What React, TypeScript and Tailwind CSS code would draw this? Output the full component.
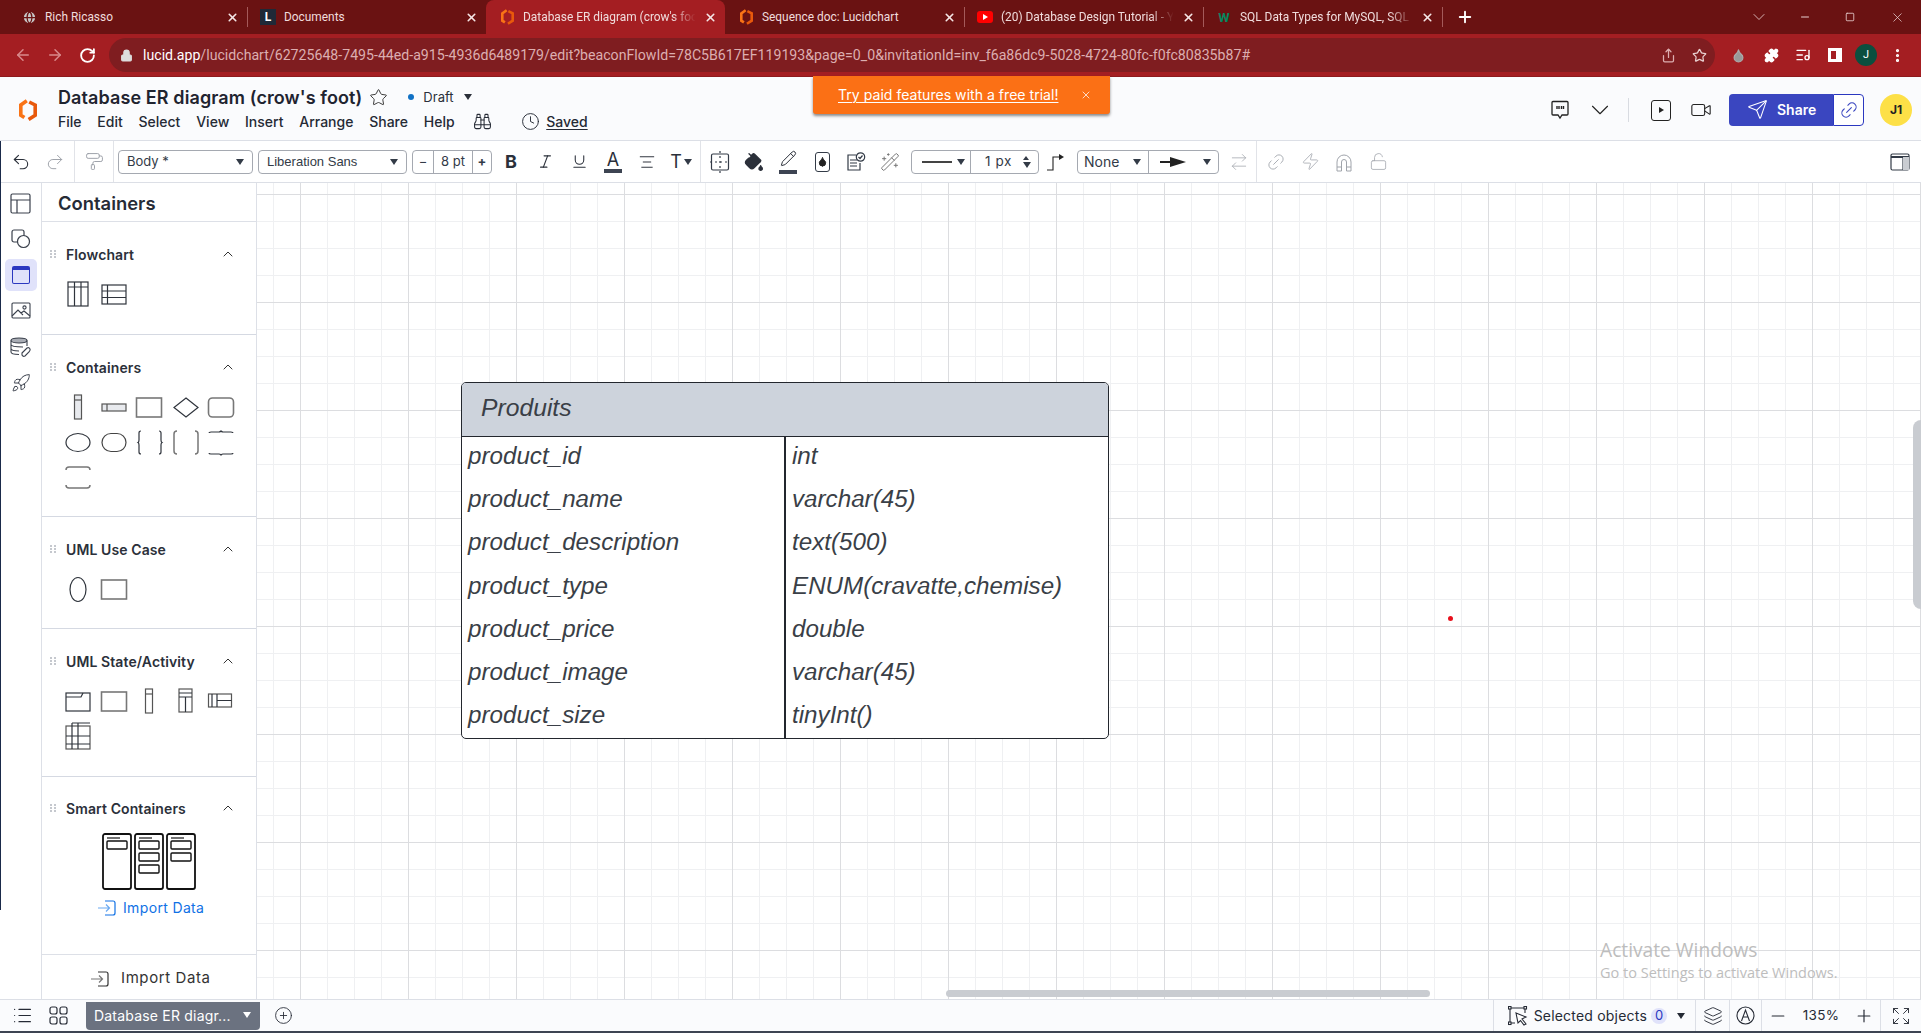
import React from "react";
import {
  ArrowLeft, ArrowRight, RotateCw, Lock, Star, ChevronUp, ChevronDown, X, Plus, Minus, Video, Send, Link2, Zap,
  LockOpen, Layers, Expand, List, CirclePlus, PaintRoller, Italic, Underline, Rocket, Binoculars, Clock,
  PaintBucket, Pencil, WandSparkles, ArrowRightLeft, Puzzle, Share, EllipsisVertical, Globe, Undo2, Redo2,
  AlignCenter, Square, ListMusic, Droplet,
} from "lucide-react";

const Logo = ({ size = 16 }: { size?: number }) => (
  <svg width={size} height={size * 1.2} viewBox="0 0 15 18" fill="none" strokeWidth="3" strokeLinejoin="miter">
    <path d="M6.500 1.500 L1.500 5 V13.500 L4.500 15.500" stroke="#f97316" />
    <path d="M8.500 2.500 L13.500 5 V13.500 L8 17" stroke="#e8590c" />
  </svg>
);

const Tri = ({ className = "" }: { className?: string }) => (
  <span className={`inline-block w-0 h-0 border-l-[4.5px] border-r-[4.5px] border-t-[6px] border-l-transparent border-r-transparent ${className}`} />
);

function Tab({ icon, label, active, sep, fade }: { icon: React.ReactNode; label: string; active?: boolean; sep?: boolean; fade?: boolean }) {
  return (
    <div className={`relative flex items-center w-[239px] h-full ${active ? "bg-[#a41e22] rounded-t-lg" : ""}`}>
      <div className="ml-[13px] w-[16px] h-[16px] flex items-center justify-center shrink-0">{icon}</div>
      <div className={`ml-[8px] w-[178px] pt-[1px] whitespace-nowrap text-[11.9px] text-[#f0dcdc] ${fade ? "[mask-image:linear-gradient(to_right,black_84%,transparent_97%)]" : ""}`}>{label}</div>
      <X size={13} strokeWidth={3} className="ml-[3px] shrink-0 text-[#f5e6e6]" />
      {sep && <div className="absolute right-[-1px] top-[7px] h-[20px] w-px bg-[#a45a5a]" />}
    </div>
  );
}

const Cell = ({ children, w = "w-[34px]" }: { children?: React.ReactNode; w?: string }) => (
  <div className={`${w} h-full flex items-center justify-center shrink-0`}>{children}</div>
);
const VSep = () => <div className="w-px h-full bg-[#e1e3e8] shrink-0" />;

const Box = ({ className = "", children }: { className?: string; children?: React.ReactNode }) => (
  <div className={`h-[24px] border border-[#a5a9b1] rounded-[4px] flex items-center text-[13px] text-[#333b47] shrink-0 bg-white ${className}`}>{children}</div>
);

const Shape = ({ children }: { children: React.ReactNode }) => (
  <svg width="36" height="35" viewBox="0 0 36 35" fill="none" stroke="#2f343c" strokeWidth="1.2">{children}</svg>
);
const G = "#777";

const Grip = () => (
  <div className="grid grid-cols-2 gap-x-[2px] gap-y-[1px] w-[6px] mr-[10px]">
    {[0, 1, 2, 3, 4, 5].map((i) => <span key={i} className="w-[2px] h-[2px] bg-[#c5c8ce]" />)}
  </div>
);

function Section({ title, h, children }: { title: string; h: string; children?: React.ReactNode }) {
  return (
    <div className={`${h} border-b border-[#d5d9e2] shrink-0 pt-[21px]`}>
      <div className="h-[22px] flex items-center pl-[8px] pr-[20px]">
        <Grip />
        <span className="text-[14px] font-semibold text-[#2b303a] tracking-[0.1px]">{title}</span>
        <ChevronUp size={16} strokeWidth={1.5} className="ml-auto text-[#333]" />
      </div>
      <div className="pl-[18px] mt-[12px]">{children}</div>
    </div>
  );
}
const ShapeGrid = ({ children }: { children: React.ReactNode }) => (
  <div className="grid grid-cols-[repeat(5,36px)] auto-rows-[35px]">{children}</div>
);

const rows = [
  ["product_id", "int"],
  ["product_name", "varchar(45)"],
  ["product_description", "text(500)"],
  ["product_type", "ENUM(cravatte,chemise)"],
  ["product_price", "double"],
  ["product_image", "varchar(45)"],
  ["product_size", "tinyInt()"],
];

const SmartCard = ({ x, n }: { x: number; n: number }) => (
  <g>
    <rect x={x} y="1" width="28" height="55" rx="2" />
    <path d={`M${x + 4} 5 H${x + 17}`} strokeWidth="1.2" />
    {Array.from({ length: n }).map((_, i) => (
      <rect key={i} x={x + 4} y={8 + i * 12} width="20" height="8" rx="1" strokeWidth="1.4" />
    ))}
  </g>
);

export default function App() {
  return (
    <div className="relative w-[1921px] h-[1033px] overflow-hidden flex flex-col bg-white [font-family:Inter,sans-serif]">
      {/* Tabs */}
      <div className="h-[34px] bg-[#6a1212] flex items-end pl-[8px] shrink-0 [font-family:Roboto,sans-serif]">
        <Tab icon={<Globe size={15} className="text-[#6a1212] fill-[#c8c8c8]" />} label="Rich Ricasso" sep />
        <Tab icon={<span className="w-[16px] h-[16px] bg-[#1f2937] text-white text-[12px] font-bold leading-[16px] text-center block">L</span>} label="Documents" />
        <Tab icon={<Logo size={13} />} label="Database ER diagram (crow's foo" active fade />
        <Tab icon={<Logo size={13} />} label="Sequence doc: Lucidchart" sep />
        <Tab icon={<span className="w-[16px] h-[12px] rounded-[3px] bg-[#f00] flex items-center justify-center"><span className="w-0 h-0 border-y-[3px] border-l-[5px] border-y-transparent border-l-white" /></span>} label="(20) Database Design Tutorial - Y" sep fade />
        <Tab icon={<span className="text-[#04875f] font-bold text-[13px] leading-none">W</span>} label="SQL Data Types for MySQL, SQL S" sep fade />
        <Plus size={18} strokeWidth={2.5} className="ml-[14px] mb-[8px] text-white" />
        <div className="ml-auto flex items-center h-full text-[#e8d0d0]">
          <ChevronDown size={20} strokeWidth={1} className="mr-[30px]" />
          <Minus size={12} className="mr-[34px]" />
          <Square size={10} className="mr-[35px]" />
          <X size={15} strokeWidth={1.2} className="mr-[16px]" />
        </div>
      </div>

      {/* Address row */}
      <div className="h-[43px] bg-[#a41e22] border-b border-[#8d1a1d] flex items-center pl-[7px] shrink-0 [font-family:Roboto,sans-serif]">
        <Cell w="w-[32px]"><ArrowLeft size={18} className="text-[#d98a8c]" /></Cell>
        <Cell w="w-[32px]"><ArrowRight size={18} className="text-[#d98a8c]" /></Cell>
        <Cell w="w-[32px]"><RotateCw size={17} strokeWidth={2.6} className="text-white" /></Cell>
        <div className="ml-[6px] w-[1606px] h-[34px] rounded-full bg-[#7f1d20] flex items-center pl-[11px] pr-[8px] text-[14.15px]">
          <Lock size={13} className="text-[#ddd] fill-[#ddd] shrink-0" />
          <span className="ml-[10px] pt-[1px] whitespace-nowrap text-white">lucid.app</span>
          <span className="pt-[1px] whitespace-nowrap text-[#dcaeb0]">/lucidchart/62725648-7495-44ed-a915-4936d6489179/edit?beaconFlowId=78C5B617EF119193&amp;page=0_0&amp;invitationId=inv_f6a86dc9-5028-4724-80fc-f0fc80835b87#</span>
          <Share size={15} className="ml-auto mr-[16px] text-[#dcaeb0]" />
          <Star size={15} className="text-[#e8d0d0]" />
        </div>
        <div className="ml-[7px] flex items-center h-full">
          <Cell w="w-[33px]"><Droplet size={15} className="text-[#aaa] fill-[#999]" /></Cell>
          <Cell w="w-[32px]"><Puzzle size={15} className="text-white fill-white" /></Cell>
          <Cell w="w-[32px]"><ListMusic size={16} className="text-white" /></Cell>
          <Cell w="w-[32px]"><span className="w-[14px] h-[14px] border-[3px] border-white border-r-[6px] bg-[#a41e22] block" /></Cell>
          <Cell w="w-[30px]"><span className="w-[22px] h-[22px] rounded-full bg-[#0b4f3f] text-white text-[11px] flex items-center justify-center">J</span></Cell>
          <Cell w="w-[33px]"><EllipsisVertical size={17} strokeWidth={2.5} className="text-white" /></Cell>
        </div>
      </div>

      {/* Header */}
      <div className="h-[64px] bg-[#fafbfd] border-b border-[#dcdfe6] flex items-start shrink-0">
        <div className="ml-[19px] mt-[22px] w-[19px]"><Logo size={18} /></div>
        <div className="ml-[20px] flex flex-col">
          <div className="flex items-center h-[22px] mt-[9px]">
            <span className="text-[18px] font-semibold text-[#1f2430] whitespace-nowrap tracking-[0.1px]">Database ER diagram (crow's foot)</span>
            <Star size={19} strokeWidth={1.2} className="ml-[7px] text-[#333]" />
            <span className="ml-[20px] w-[6px] h-[6px] rounded-full bg-[#1071c5]" />
            <span className="ml-[9px] pt-[1px] text-[13px] text-[#2b303a]">Draft</span>
            <Tri className="ml-[10px] border-t-[#2b303a]" />
          </div>
          <div className="flex items-center h-[22px] mt-[2px] text-[14px] font-medium text-[#252a35] gap-[15.8px]">
            <span>File</span><span>Edit</span><span>Select</span><span>View</span><span>Insert</span><span>Arrange</span><span>Share</span><span>Help</span>
            <Binoculars size={19} strokeWidth={1.3} className="ml-[3px]" />
            <div className="flex items-center ml-[13px]">
              <Clock size={19} strokeWidth={1.2} />
              <span className="ml-[6px] underline underline-offset-2">Saved</span>
            </div>
          </div>
        </div>
        <div className="ml-auto mr-[9px] flex items-center h-[32px] mt-[17px] text-[#222]">
          <Cell w="w-[40px]">
            <svg width="20" height="22" viewBox="0 0 20 22" fill="none" stroke="#222" strokeWidth="1.3"><path d="M3 2.500 H17 Q18 2.500 18 3.500 V15 Q18 16 17 16 H12 L10 19 L8 16 H3 Q2 16 2 15 V3.500 Q2 2.500 3 2.500 Z" /><path d="M7 7 V10 M9 7 V10 M11.500 7 V10 M13.500 7 V10" strokeWidth="1.4" /></svg>
          </Cell>
          <Cell w="w-[40px]"><ChevronDown size={30} strokeWidth={0.9} /></Cell>
          <div className="ml-[8px] w-px h-[24px] bg-[#d8dbe1]" />
          <div className="ml-[12px] h-full"><Cell w="w-[40px]"><div className="w-[20px] h-[21px] border-[1.3px] border-[#222] rounded-[3px] flex items-center justify-center"><span className="w-0 h-0 border-y-[3.5px] border-l-[5px] border-y-transparent border-l-[#222]" /></div></Cell></div>
          <Cell w="w-[40px]"><Video size={22} strokeWidth={1.2} /></Cell>
          <div className="ml-[8px] w-[104px] h-[32px] bg-[#3a46c0] rounded-l-[4px] flex items-center pl-[18px] pb-[1px] text-white text-[14px] font-semibold">
            <Send size={21} strokeWidth={1.2} className="mr-[9px]" />Share
          </div>
          <div className="w-[31px] h-[32px] border border-[#2b38c0] rounded-r-[4px] bg-white flex items-center justify-center">
            <Link2 size={20} strokeWidth={1.3} className="text-[#3a46c0] -rotate-45" />
          </div>
          <div className="ml-[16px] w-[32px] h-[32px] rounded-full bg-[#fde047] flex items-center justify-center text-[12px] font-bold text-[#222]">J1</div>
        </div>
      </div>

      {/* Toolbar */}
      <div className="h-[42px] bg-white border-b border-[#dcdfe6] flex items-center pl-[4px] pr-[4px] shrink-0 text-[#2b303a]">
        <Cell><Undo2 size={20} strokeWidth={1.3} /></Cell>
        <Cell><Redo2 size={20} strokeWidth={1.2} className="text-[#a0a4ab]" /></Cell>
        <div className="ml-[2px] h-full"><VSep /></div>
        <Cell w="w-[38px]"><PaintRoller size={19} strokeWidth={1.2} className="text-[#9a9ea6]" /></Cell>
        <VSep />
        <Box className="ml-[4px] w-[135px] pl-[8px] pr-[8px] justify-between"><span>Body *</span><Tri className="border-t-[#333b47]" /></Box>
        <Box className="ml-[5px] w-[149px] pl-[8px] pr-[8px] justify-between [font-family:'Liberation_Sans',sans-serif]"><span>Liberation Sans</span><Tri className="border-t-[#333b47]" /></Box>
        <Box className="ml-[5px] w-[80px]">
          <span className="w-[20px] text-center">−</span>
          <span className="w-[40px] h-full border-x border-[#a5a9b1] flex items-center justify-center">8 pt</span>
          <span className="w-[18px] text-center font-bold">+</span>
        </Box>
        <div className="ml-[2px] flex items-center h-full">
          <Cell><span className="text-[18px] font-bold text-[#2b303a]">B</span></Cell>
          <Cell><Italic size={17} strokeWidth={1.6} /></Cell>
          <Cell><Underline size={17} strokeWidth={1.5} /></Cell>
          <Cell><div className="flex flex-col items-center"><span className="text-[18px] leading-[19px]">A</span><span className="w-[18px] h-[4px] bg-[#3d4452]" /></div></Cell>
          <Cell><AlignCenter size={18} strokeWidth={1.3} /></Cell>
          <Cell><span className="text-[18px] flex items-center gap-[2px]">T<Tri className="border-l-[3px] border-r-[3px] border-t-[4px] border-t-[#333b47]" /></span></Cell>
        </div>
        <div className="ml-[2px] h-full"><VSep /></div>
        <div className="ml-[2px] flex items-center h-full">
          <Cell><svg width="20" height="22" viewBox="0 0 20 22" fill="none" stroke="#333b47" strokeWidth="1.2"><rect x="1.500" y="3" width="17" height="16" rx="1.500" /><path d="M10 0 V22 M0 11 H20" strokeDasharray="2 3" /></svg></Cell>
          <Cell><PaintBucket size={20} strokeWidth={1.6} className="fill-[#2b303a] text-[#2b303a]" /></Cell>
          <Cell><div className="flex flex-col items-center"><Pencil size={17} strokeWidth={1.4} /><span className="mt-[3px] w-[18px] h-[4px] bg-[#3d4452]" /></div></Cell>
          <Cell><div className="w-[15px] h-[20px] border-[1.3px] border-[#333b47] rounded-[3px] flex items-center justify-center"><Droplet size={11} className="fill-[#222] text-[#222]" /></div></Cell>
          <Cell><svg width="20" height="20" viewBox="0 0 20 20" fill="none" stroke="#333b47" strokeWidth="1.2"><path d="M10 3 H2 V18 H14 V11" /><path d="M4 8 H11 M4 11 H11 M4 14 H11" /><circle cx="14.500" cy="5" r="4.200" /><path d="M12.500 5 L14 6.500 L16.500 3.500" /></svg></Cell>
          <Cell><WandSparkles size={20} strokeWidth={1.2} className="text-[#777]" /></Cell>
        </div>
        <Box className="ml-[4px] w-[128px]">
          <div className="w-[59px] h-full flex items-center pl-[10px] pr-[5px] border-r border-[#a5a9b1] justify-between">
            <span className="w-[30px] h-[2px] bg-[#444]" /><Tri className="border-t-[#333b47]" />
          </div>
          <div className="flex-1 flex items-center justify-between pl-[14px] pr-[7px]">
            <span className="text-[13.5px] tracking-[0.6px]">1 px</span>
            <span className="flex flex-col gap-[2px]"><span className="w-0 h-0 border-x-[3.5px] border-b-[4px] border-x-transparent border-b-[#333b47]" /><Tri className="border-l-[3.5px] border-r-[3.5px] border-t-[4px] border-t-[#333b47]" /></span>
          </div>
        </Box>
        <Cell><svg width="20" height="20" viewBox="0 0 20 20" fill="none" stroke="#222" strokeWidth="1.1"><path d="M1 18 H7 V5 H14" /><path d="M13 2 L18 5 L13 8 Z" fill="#222" stroke="none" /></svg></Cell>
        <Box className="ml-[4px] w-[142px]">
          <div className="w-[71px] h-full flex items-center justify-between pl-[6px] pr-[7px] border-r border-[#a5a9b1] text-[14px]"><span>None</span><Tri className="border-t-[#333b47]" /></div>
          <div className="flex-1 flex items-center justify-between pl-[11px] pr-[7px]">
            <svg width="26" height="12" viewBox="0 0 26 12"><path d="M0 6 H12" stroke="#222" strokeWidth="2" /><path d="M10 1 L26 6 L10 11 Z" fill="#222" /></svg>
            <Tri className="border-t-[#333b47]" />
          </div>
        </Box>
        <div className="ml-[3px] h-full"><Cell><ArrowRightLeft size={20} strokeWidth={0.9} className="text-[#a0a4ab]" /></Cell></div>
        <VSep />
        <div className="ml-[2px] flex items-center h-full text-[#a0a4ab]">
          <Cell><Link2 size={20} strokeWidth={1} className="-rotate-45" /></Cell>
          <Cell><Zap size={19} strokeWidth={1} /></Cell>
          <Cell><svg width="20" height="20" viewBox="0 0 20 20" fill="none" stroke="#a0a4ab" strokeWidth="1"><path d="M3 19 V10 a7 7 0 0 1 14 0 V19 H12.500 V10 a2.500 2.500 0 0 0 -5 0 V19 Z M3 15 H7.500 M12.500 15 H17" /></svg></Cell>
          <Cell><LockOpen size={19} strokeWidth={1} /></Cell>
        </div>
        <div className="ml-auto h-full"><Cell>
          <svg width="20" height="20" viewBox="0 0 20 20" fill="none" stroke="#333b47" strokeWidth="1.2"><rect x="1" y="2" width="18" height="16" rx="1.500" /><path d="M1 5 H19" strokeWidth="2" /><path d="M13 5 V18" /><rect x="13" y="5" width="6" height="13" fill="#c9ccd1" stroke="none" /></svg>
        </Cell></div>
      </div>

      {/* Main */}
      <div className="flex-1 min-h-0 flex">
        {/* Rail */}
        <div className="w-[42px] border-r border-[#dde0e7] bg-white flex flex-col items-center pt-[2px] shrink-0">
          <div className="h-[36px] flex items-center"><svg width="21" height="21" viewBox="0 0 21 21" fill="none" stroke="#3a404c" strokeWidth="1.2"><rect x="1" y="1" width="19" height="19" rx="1.500" /><path d="M1 7 H20 M7 7 V20" /></svg></div>
          <div className="h-[36px] flex items-center"><svg width="20" height="20" viewBox="0 0 20 20" fill="none" stroke="#3a404c" strokeWidth="1.2"><rect x="1" y="1" width="12" height="12" rx="2" /><circle cx="12.500" cy="12.500" r="6" fill="#fff" /></svg></div>
          <div className="w-[32px] h-[32px] mt-[2px] mb-[2px] rounded-[5px] bg-[#e0e2fa] flex items-center justify-center">
            <div className="w-[18px] h-[18px] border-[1.2px] border-[#2b38c0] border-t-[4px] rounded-[2px]" />
          </div>
          <div className="h-[36px] flex items-center"><svg width="20" height="18" viewBox="0 0 20 18" fill="none" stroke="#3a404c" strokeWidth="1.1"><rect x="1" y="1" width="18" height="15" rx="1" /><circle cx="13.500" cy="5.500" r="1.600" /><path d="M1 14 L7 8 L12 13 M10 11 L13 9 L19 14" /></svg></div>
          <div className="h-[36px] flex items-center"><svg width="22" height="20" viewBox="0 0 22 20" fill="none" stroke="#3a404c" strokeWidth="1.1"><ellipse cx="9" cy="3.500" rx="8" ry="2.500" fill="#a9adb5" /><path d="M1 3.500 V15 Q1 17.500 9 17.500 M17 3.500 V9 M1 7.500 Q1 10 13 10 M1 11.500 Q1 14 9 14" /><path d="M12 16 L17 11 Q19 10 20 12 Q20.500 13 19 15 L15 19 Q13 20 12 18 Z" /></svg></div>
          <div className="h-[36px] flex items-center"><Rocket size={20} strokeWidth={1.2} className="text-[#3a404c]" /></div>
        </div>

        {/* Panel */}
        <div className="w-[215px] border-r border-[#dde0e7] bg-white flex flex-col shrink-0">
          <div className="h-[39px] border-b border-[#dde0e7] flex items-center pl-[16px] pt-[3px] text-[18.4px] font-semibold text-[#262b36] shrink-0">Containers</div>
          <Section title="Flowchart" h="h-[113px]">
            <ShapeGrid>
              <Shape><rect x="8" y="5" width="20" height="24" /><path d="M8 10 H28 M14.500 5 V29 M21 5 V29" /></Shape>
              <Shape><rect x="6" y="8" width="24" height="19" /><path d="M6 14 H30 M6 20.500 H30 M11.500 8 V27" /></Shape>
            </ShapeGrid>
          </Section>
          <Section title="Containers" h="h-[182px]">
            <ShapeGrid>
              <Shape><rect x="14.500" y="5" width="7" height="24" fill="#e8eaee" stroke="#555" /><path d="M14.500 10 H21.500" stroke="#555" /></Shape>
              <Shape><rect x="6" y="14" width="24" height="7" fill="#e8eaee" stroke="#555" /><path d="M11 14 V21" stroke="#555" /></Shape>
              <Shape><rect x="4.500" y="8" width="25" height="19" stroke={G} strokeWidth="1.6" /></Shape>
              <Shape><path d="M18 8 L30 17.500 L18 27 L6 17.500 Z" /></Shape>
              <Shape><rect x="4.500" y="8" width="25" height="19" rx="4" stroke={G} strokeWidth="1.6" /></Shape>
              <Shape><ellipse cx="18" cy="17.500" rx="12" ry="9" /></Shape>
              <Shape><rect x="6" y="8.500" width="24" height="18" rx="9" stroke="#444" /></Shape>
              <Shape><path d="M9 6 Q7 6 7 8 V15 Q7 17 6 17.500 Q7 18 7 20 V27 Q7 29 9 29 M27 6 Q29 6 29 8 V15 Q29 17 30 17.500 Q29 18 29 20 V27 Q29 29 27 29" /></Shape>
              <Shape><path d="M9 6 Q6 6 6 9 V26 Q6 29 9 29 M27 6 Q30 6 30 9 V26 Q30 29 27 29" stroke={G} strokeWidth="1.5" /></Shape>
              <Shape><path d="M5 8 Q5 7 7 7 H15 Q16 7 17 6 Q18 7 19 7 H27 Q29 7 29 8 M5 28 Q5 29 7 29 H15 Q16 29 17 30 Q18 29 19 29 H27 Q29 29 29 28" /></Shape>
              <Shape><path d="M6 10 Q6 7 9 7 H27 Q30 7 30 10 M6 25 Q6 28 9 28 H27 Q30 28 30 25" stroke={G} strokeWidth="1.5" /></Shape>
            </ShapeGrid>
          </Section>
          <Section title="UML Use Case" h="h-[112px]">
            <ShapeGrid>
              <Shape><ellipse cx="18" cy="17.500" rx="8" ry="12" /></Shape>
              <Shape><rect x="5.500" y="8" width="25" height="19" stroke={G} strokeWidth="1.6" /></Shape>
            </ShapeGrid>
          </Section>
          <Section title="UML State/Activity" h="h-[148px]">
            <ShapeGrid>
              <Shape><rect x="6" y="9" width="24" height="18" /><path d="M6 13 H21 L23 9" /></Shape>
              <Shape><rect x="5.500" y="8" width="25" height="19" stroke={G} strokeWidth="1.6" /></Shape>
              <Shape><rect x="13.500" y="5" width="7" height="24" stroke="#555" /><path d="M13.500 10 H20.500" stroke="#555" /></Shape>
              <Shape><rect x="11" y="5" width="13" height="23" stroke="#555" /><path d="M11 9 H24 M11 13 H24 M17.500 13 V28" /></Shape>
              <Shape><rect x="4.500" y="10" width="23" height="13" stroke="#555" /><path d="M8 10 V23 M13 10 V23 M13 16.500 H27.500" /></Shape>
              <Shape><rect x="6" y="7" width="24" height="23" stroke="#555" /><path d="M6 17 H30 M6 25 H30 M12 4 H30 M18 4 V30 M12 4 V30" /></Shape>
            </ShapeGrid>
          </Section>
          <div className="h-[178px] border-b border-[#dde0e7] shrink-0 flex flex-col">
            <div className="mt-[20px] h-[22px] flex items-center pl-[8px] pr-[20px] shrink-0">
              <Grip />
              <span className="text-[14px] font-semibold text-[#2b303a] tracking-[0.1px]">Smart Containers</span>
              <ChevronUp size={16} strokeWidth={1.5} className="ml-auto text-[#333]" />
            </div>
            <svg className="ml-[60px] mt-[14px]" width="94" height="57" viewBox="0 0 94 57" fill="none" stroke="#111" strokeWidth="1.8">
              <SmartCard x={1} n={1} />
              <SmartCard x={33} n={3} />
              <SmartCard x={65} n={2} />
            </svg>
            <div className="mt-[7px] ml-[56px] flex items-center text-[#1071e5] text-[14px] tracking-[0.35px]">
              <svg width="18" height="16" viewBox="0 0 18 16" fill="none" stroke="#1071e5" strokeWidth="1.2"><path d="M7 1 H15 Q17 1 17 3 V13 Q17 15 15 15 H7" /><path d="M0 8 H11 M8 4.500 L11.500 8 L8 11.500" stroke="#6aa9f2" /></svg>
              <span className="ml-[7px]">Import Data</span>
            </div>
          </div>
          <div className="flex-1 flex items-center pl-[49px] pt-[3px] text-[15px] text-[#333] tracking-[0.6px]">
            <svg width="18" height="16" viewBox="0 0 18 16" fill="none" stroke="#333" strokeWidth="1.2"><path d="M7 1 H15 Q17 1 17 3 V13 Q17 15 15 15 H7" /><path d="M0 8 H11 M8 4.500 L11.500 8 L8 11.500" stroke="#777" /></svg>
            <span className="ml-[12px]">Import Data</span>
          </div>
        </div>

        {/* Canvas */}
        <div className="relative flex-1 min-w-0 bg-white overflow-hidden [background-image:linear-gradient(to_right,#dcdde0_1px,transparent_1px),linear-gradient(to_bottom,#dcdde0_1px,transparent_1px),linear-gradient(to_right,#eff0f2_1px,transparent_1px),linear-gradient(to_bottom,#eff0f2_1px,transparent_1px)] [background-size:108px_108px,108px_108px,27px_27px,27px_27px] [background-position:43px_11px,43px_11px,16px_11px,16px_11px]">
          <div className="absolute left-[204px] top-[199px] w-[648px] h-[357px] border-[1.5px] border-[#23272e] rounded-[5px] overflow-hidden bg-white flex flex-col [font-family:'Liberation_Sans',sans-serif] italic text-[#3a3f47]">
            <div className="h-[54px] bg-[#cdd3dc] border-b-[1.5px] border-[#23272e] flex items-center pl-[19px] pb-[4px] text-[24.7px] shrink-0">Produits</div>
            <div className="flex-1 grid grid-cols-[323px_1fr] auto-rows-[43.2px] text-[24.2px] relative">
              <div className="absolute left-[322px] top-0 bottom-0 w-[1.5px] bg-[#23272e]" />
              {rows.map(([a, b]) => (
                <React.Fragment key={a}>
                  <div className="flex items-center pl-[6px] pb-[5px] whitespace-nowrap">{a}</div>
                  <div className="flex items-center pl-[7px] pb-[5px] whitespace-nowrap">{b}</div>
                </React.Fragment>
              ))}
            </div>
          </div>
          <div className="absolute left-[1191px] top-[433px] w-[5px] h-[5px] rounded-full bg-[#e8101c]" />
          <div className="absolute left-[689px] top-[807px] w-[484px] h-[7px] rounded-full bg-[#c9ccd1]" />
          <div className="absolute right-0 top-[237px] w-[8px] h-[189px] rounded-l-full bg-[#c9ccd1]" />
          <div className="absolute left-[1343px] top-[754px] text-[#bdbdbd] [font-family:'Open_Sans',sans-serif]">
            <div className="text-[19.2px] leading-[26px]">Activate Windows</div>
            <div className="text-[14.5px] leading-[20px]">Go to Settings to activate Windows.</div>
          </div>
        </div>
      </div>

      {/* Bottom bar */}
      <div className="h-[34px] bg-[#fafbfd] border-t border-[#dcdfe6] border-b-2 border-b-[#3d4452] flex items-center shrink-0 text-[#252a35]">
        <div className="w-[86px] h-full flex items-center shrink-0">
          <Cell w="w-[44px]"><List size={21} strokeWidth={1.4} /></Cell>
          <Cell w="w-[28px]">
            <svg width="19" height="19" viewBox="0 0 19 19" fill="none" stroke="#252a35" strokeWidth="1.2"><rect x="1" y="1" width="7" height="7" rx="2" /><rect x="11" y="1" width="7" height="7" rx="2" /><rect x="1" y="11" width="7" height="7" rx="2" /><rect x="11" y="11" width="7" height="7" rx="2" /></svg>
          </Cell>
        </div>
        <div className="w-[174px] h-[28px] bg-[#6b7280] rounded-b-[4px] flex items-center pl-[8px] pr-[9px] text-white text-[14px] tracking-[0.2px] justify-between shrink-0">
          <span className="whitespace-nowrap">Database ER diagr...</span>
          <Tri className="border-t-white mb-[2px]" />
        </div>
        <CirclePlus size={19} strokeWidth={1.1} className="ml-[14px]" />
        <div className="ml-auto flex items-center h-full text-[14px]">
          <div className="h-full border-l border-[#dcdfe6] flex items-center pl-[14px] pr-[10px]">
            <svg width="20" height="20" viewBox="0 0 20 20" fill="none" stroke="#252a35" strokeWidth="1.1"><path d="M2 2 H17 M2 2 V17 M2 17 H7 M17 2 V7" /><rect x="0.500" y="0.500" width="2.500" height="2.500" fill="#fff" /><rect x="16" y="0.500" width="2.500" height="2.500" fill="#fff" /><rect x="0.500" y="16" width="2.500" height="2.500" fill="#fff" /><path d="M8 7 L18 11 L14 13 L18 18 L16 19 L12.500 14.500 L10 17 Z" fill="#fff" /></svg>
            <span className="ml-[6px] whitespace-nowrap tracking-[0.2px]">Selected objects</span>
            <span className="ml-[4px] w-[16px] h-[16px] rounded-full bg-[#e0e2fa] text-[#2b38c0] text-[13px] flex items-center justify-center">0</span>
            <Tri className="ml-[10px] border-t-[#252a35]" />
          </div>
          <div className="h-full w-[34px] border-l border-[#dcdfe6] flex items-center justify-center"><Layers size={20} strokeWidth={1.1} /></div>
          <div className="h-full w-[32px] border-l border-[#dcdfe6] flex items-center justify-center">
            <svg width="19" height="19" viewBox="0 0 19 19" fill="none" stroke="#252a35" strokeWidth="1.1"><circle cx="9.500" cy="9.500" r="8.500" /><path d="M5.500 15 L9.500 4 L13.500 15 M7 11 H12" /></svg>
          </div>
          <div className="h-full w-[120px] border-x border-[#dcdfe6] flex items-center justify-between pl-[6px] pr-[6px]">
            <Minus size={20} strokeWidth={1.4} /><span className="text-[13.5px] tracking-[0.3px]">135%</span><Plus size={20} strokeWidth={1.4} />
          </div>
          <div className="h-full w-[40px] flex items-center justify-center"><Expand size={20} strokeWidth={1.1} /></div>
        </div>
      </div>

      {/* Left edge line */}
      <div className="absolute left-0 top-[141px] w-px h-[769px] bg-[#1a2a4a]" />

      {/* Promo toast */}
      <div className="absolute left-[813px] top-[76px] w-[297px] h-[38px] bg-[#fb7015] rounded-b-[3px] shadow-[0_2px_3px_rgba(0,0,0,0.45)] flex items-center text-white text-[14.1px]">
        <span className="ml-[25px] underline underline-offset-2 whitespace-nowrap">Try paid features with a free trial!</span>
        <X size={12} strokeWidth={1.5} className="ml-auto mr-[18px]" />
      </div>
    </div>
  );
}
